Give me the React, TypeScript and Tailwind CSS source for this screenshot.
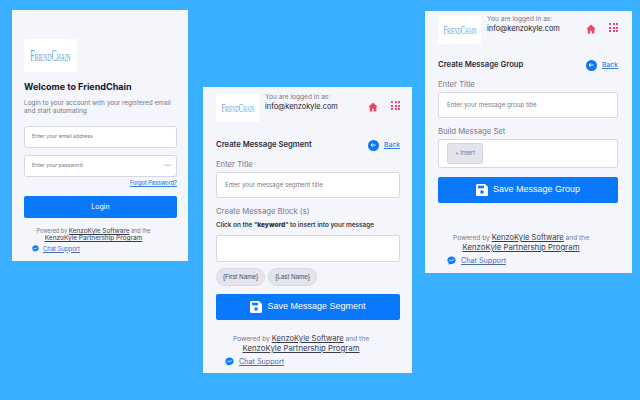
import { ReactNode } from 'react'

const sans = { fontFamily: 'Inter, "Liberation Sans", sans-serif' }

function Logo({ className, textClass }: { className: string; textClass: string }) {
  return (
    <div className={`bg-white flex items-center justify-center shrink-0 overflow-hidden ${className}`}>
      <span className={`font-['Liberation_Serif',serif] [font-variant:small-caps] inline-block scale-x-[0.5] whitespace-nowrap ${textClass}`}>
        FriendChain
      </span>
    </div>
  )
}

function Messenger({ size }: { size: number }) {
  return (
    <svg width={size} height={size} viewBox="0 0 24 24" className="shrink-0">
      <path fill="#0a7cff" d="M12 1C6 1 1 5.5 1 11.3c0 3 1.3 5.6 3.4 7.4V23l3.7-2c1.2.4 2.5.6 3.9.6 6 0 11-4.5 11-10.3S18 1 12 1z" />
      <path fill="none" stroke="#fff" strokeWidth="2.2" d="M6 14.5l4.2-4.3 3.3 2.8 4.4-4" />
    </svg>
  )
}

function Footer({ small, className, chatClass }: { small?: boolean; className: string; chatClass: string }) {
  return (
    <div className={className}>
      <p className={`text-center pr-[14px] whitespace-nowrap text-[#77778a] ${small ? 'text-[5.5px] leading-[8px]' : 'text-[6.6px] leading-[9px]'}`}>
        Powered by <span className={`text-[#3a3a48] underline ${small ? 'text-[6.4px]' : 'text-[7.6px]'}`}>KenzoKyle Software</span> and the
      </p>
      <p className={`text-center pr-[14px] whitespace-nowrap text-[#3a3a48] underline ${small ? 'text-[6.5px] leading-[7.5px]' : 'text-[7.8px] leading-[9px]'}`}>
        KenzoKyle Partnership Program
      </p>
      <div className={`flex items-center ${small ? 'gap-[4px] mt-[2px]' : 'gap-[5px] mt-[4px]'} ${chatClass}`}>
        <Messenger size={small ? 7 : 9} />
        <span className={`text-[#4a6cb8] underline ${small ? 'text-[5.9px] leading-[8px]' : 'text-[7.2px] leading-[9px]'}`}>Chat Support</span>
      </div>
    </div>
  )
}

function SaveIcon() {
  return (
    <svg width="12" height="12" viewBox="0 0 24 24" className="shrink-0">
      <path fill="#fff" d="M3 0h15l6 6v15a3 3 0 0 1-3 3H3a3 3 0 0 1-3-3V3a3 3 0 0 1 3-3z" />
      <rect x="4" y="3.5" width="12" height="5" fill="#0a78fb" />
      <circle cx="12" cy="16" r="3.6" fill="#0a78fb" />
    </svg>
  )
}

function Header() {
  return (
    <div className="flex items-start">
      <Logo className="w-[43px] h-[28px]" textClass="text-[13px] text-[#5f9fd2]" />
      <div className="ml-[6px] -mt-px flex-1">
        <p className="text-[6.6px] leading-[9px] text-[#77778a]">You are logged in as:</p>
        <p className="text-[7.4px] leading-[9px] text-[#15152a]">info@kenzokyle.com</p>
      </div>
      <svg width="10" height="10" viewBox="0 0 24 24" className="mt-[8px] mr-[13px]">
        <path fill="#ee4466" d="M12 1L1 12h3v11h6v-7h4v7h6V12h3z" />
      </svg>
      <div className="grid grid-cols-3 gap-[1.5px] w-[9px] mt-[7px]">
        {Array.from({ length: 9 }).map((_, i) => (
          <span key={i} className="w-[2px] h-[2px] bg-[#ec4a6c]" />
        ))}
      </div>
    </div>
  )
}

function TitleRow({ title, className }: { title: string; className: string }) {
  return (
    <div className={`flex items-center justify-between h-[12px] ${className}`}>
      <span className="text-[7.7px] font-semibold text-[#2c2c3a]">{title}</span>
      <span className="flex items-center gap-[5px]">
        <span className="w-[11px] h-[11px] rounded-full bg-[#0a78fb] flex items-center justify-center">
          <svg width="6" height="6" viewBox="0 0 12 12" fill="none" stroke="#fff" strokeWidth="2">
            <path d="M11 6H2M5.5 2.5L2 6l3.5 3.5" />
          </svg>
        </span>
        <span className="text-[6.8px] font-medium text-[#2f7fe0] underline">Back</span>
      </span>
    </div>
  )
}

function Label({ children, className }: { children: ReactNode; className: string }) {
  return <p className={`text-[7.7px] leading-[11px] text-[#77778a] ${className}`}>{children}</p>
}

function Field({ placeholder }: { placeholder: string }) {
  return (
    <div className="h-[26px] bg-white border border-[#d8d8e2] rounded-[2px] flex items-center pl-2 mt-[2px] text-[6.2px] text-[#77778a]">
      {placeholder}
    </div>
  )
}

function SaveButton({ label, className }: { label: string; className: string }) {
  return (
    <div className={`h-[26px] bg-[#0a78fb] rounded-[2px] flex items-center justify-center gap-[5px] text-white text-[9px] font-['Liberation_Sans',sans-serif] ${className}`}>
      <SaveIcon />
      {label}
    </div>
  )
}

export default function App() {
  return (
    <div className="relative w-[640px] h-[400px] overflow-hidden bg-[#38b0ff]" style={sans}>
      {/* login */}
      <div className="absolute left-[12px] top-[10px] w-[176px] h-[251px] bg-[#f5f6fb] pl-3 pr-[11px] pt-[29px]">
        <Logo className="w-[53px] h-[33px]" textClass="text-[16px] text-[#5f9fd2]" />
        <p className="mt-[8px] text-[9px] leading-[14px] font-bold text-[#14142e]">Welcome to FriendChain</p>
        <p className="mt-[5px] text-[6.45px] leading-[8px] text-[#77778a]">
          Login to your account with your registered email and start automating
        </p>
        <div className="mt-[11px] h-[22px] bg-white border border-[#d8d8e2] rounded-[3px] flex items-center pl-[7px] text-[5.2px] text-[#77778a]">
          Enter your email address
        </div>
        <div className="mt-[7px] h-[22px] bg-white border border-[#d8d8e2] rounded-[3px] flex items-center justify-between pr-[5px] pl-[7px] text-[5.2px] text-[#77778a]">
          <span>Enter your password</span>
          <span className="text-[#b8b8c4] tracking-[-0.5px]">•••</span>
        </div>
        <p className="text-right text-[5.5px] leading-[8px] mt-[2px] font-medium text-[#2f7fe0] underline">Forgot Password?</p>
        <div className="mt-[9px] h-[22px] bg-[#0a78fb] rounded-[2px] flex items-center justify-center text-white text-[7px]">
          Login
        </div>
        <Footer small className="mt-[9px]" chatClass="pl-[8px]" />
      </div>

      {/* message segment */}
      <div className="absolute left-[203px] top-[87px] w-[209px] h-[286px] bg-[#f5f6fb] pl-[13px] pr-[12px] pt-[7px]">
        <Header />
        <TitleRow title="Create Message Segment" className="mt-[17px]" />
        <Label className="mt-[8px]">Enter Title</Label>
        <Field placeholder="Enter your message segment title" />
        <Label className="mt-[8px]">Create Message Block (s)</Label>
        <p className="mt-[4px] text-[6.4px] leading-[8px] font-semibold text-[#3a3a48]">
          Click on the "<b>keyword</b>" to insert into your message
        </p>
        <div className="mt-[6px] h-[27px] bg-white border border-[#d8d8e2] rounded-[2px]" />
        <div className="mt-[6px] flex gap-[3px]">
          {['{First Name}', '{Last Name}'].map(t => (
            <span key={t} className="h-[18px] w-[49px] flex items-center justify-center rounded-full bg-[#e4e5ec] border border-[#d8d8e2] text-[6.3px] text-[#4a4a58] font-['Liberation_Sans',sans-serif]">
              {t}
            </span>
          ))}
        </div>
        <SaveButton label="Save Message Segment" className="mt-[8px]" />
        <Footer className="mt-[14px]" chatClass="pl-[9px]" />
      </div>

      {/* message group */}
      <div className="absolute left-[425px] top-[11px] w-[207px] h-[262px] bg-[#f5f6fb] pl-[13px] pr-[14px] pt-[5px]">
        <Header />
        <TitleRow title="Create Message Group" className="mt-[15px]" />
        <Label className="mt-[8px]">Enter Title</Label>
        <Field placeholder="Enter your message group title" />
        <Label className="mt-[8px]">Build Message Set</Label>
        <div className="mt-[2px] h-[29px] bg-white border border-[#d8d8e2] rounded-[2px] flex items-center pl-2">
          <span className="h-[21px] w-[36px] bg-[#e4e5ec] border border-[#d8d8e2] rounded-[2px] flex items-center justify-center text-[5.5px] text-[#77778a]">+ Insert</span>
        </div>
        <SaveButton label="Save Message Group" className="mt-[9px]" />
        <Footer className="mt-[30px]" chatClass="pl-[9px]" />
      </div>
    </div>
  )
}
